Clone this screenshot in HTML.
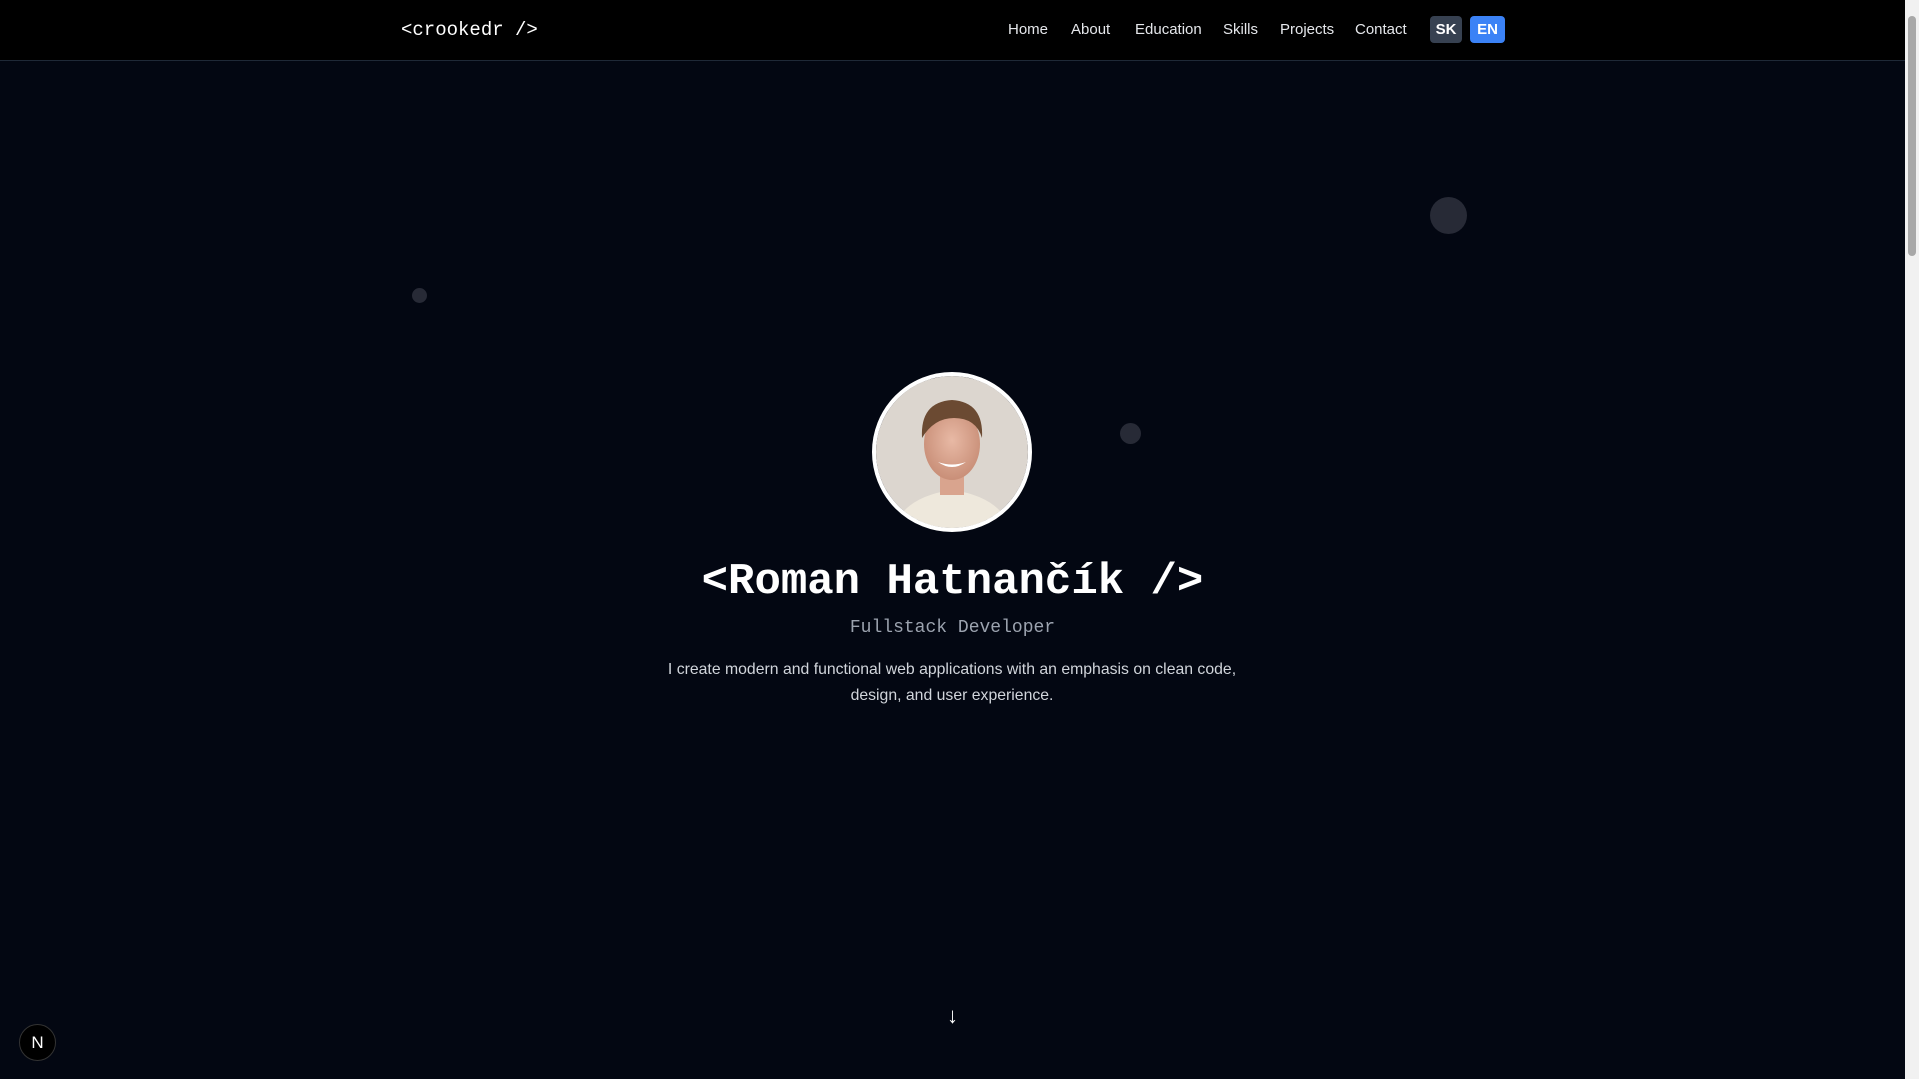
<!DOCTYPE html>
<html><head><meta charset="utf-8"><style>
*{margin:0;padding:0;box-sizing:border-box}
html,body{width:1919px;height:1079px;overflow:hidden;background:#030712;font-family:"Liberation Sans",sans-serif;color:#fff}
nav{position:absolute;left:0;top:0;width:1905px;height:61px;background:#000;border-bottom:1px solid #1f2937}
.logo{position:absolute;left:401px;top:19px;font:19px "Liberation Mono",monospace;color:#fff}
.links a{position:absolute;top:21px;font-size:15px;color:#e5e7eb;text-decoration:none}
.btn{position:absolute;top:16px;height:27px;border-radius:4px;font-size:15px;font-weight:bold;text-align:center;line-height:27px}
.dot{position:absolute;border-radius:50%;background:#272a36}
.sb{position:absolute;right:0;top:0;width:14px;height:1079px;background:#f1f1f1}
.sb div{position:absolute;left:3px;top:16px;width:8px;height:240px;background:#a8a8a8;border-radius:4px}
</style></head><body>
<nav>
<div class="logo">&lt;crookedr /&gt;</div>
<div class="links">
<a style="left:1008px">Home</a><a style="left:1071px">About</a><a style="left:1135px">Education</a><a style="left:1223px">Skills</a><a style="left:1280px">Projects</a><a style="left:1355px">Contact</a>
</div>
<div class="btn" style="left:1430px;width:32px;background:#374151">SK</div>
<div class="btn" style="left:1470px;width:35px;background:#3b82f6">EN</div>
</nav>
<div class="dot" style="left:1430px;top:197px;width:37px;height:37px"></div>
<div class="dot" style="left:412px;top:288px;width:15px;height:15px"></div>
<div class="dot" style="left:1120px;top:423px;width:21px;height:21px"></div>
<svg style="position:absolute;left:872px;top:372px" width="160" height="160" viewBox="0 0 160 160">
<defs><clipPath id="c"><circle cx="80" cy="80" r="76"/></clipPath>
<radialGradient id="f" cx="50%" cy="45%" r="55%"><stop offset="0" stop-color="#e8b9a5"/><stop offset="1" stop-color="#c98f78"/></radialGradient></defs>
<g clip-path="url(#c)">
<rect width="160" height="160" fill="#dcd6cf"/>
<path d="M20 160 Q30 125 80 118 Q130 125 140 160Z" fill="#eee8dc"/>
<rect x="68" y="95" width="24" height="28" fill="#d9a48e"/>
<ellipse cx="80" cy="72" rx="28" ry="36" fill="url(#f)"/>
<path d="M50 66 Q48 30 80 28 Q112 30 110 66 Q104 46 82 46 Q62 46 50 66Z" fill="#6b4a32"/>
<path d="M66 90 Q80 100 94 90 Q80 95 66 90Z" fill="#fff"/>
</g>
<circle cx="80" cy="80" r="78" fill="none" stroke="#fff" stroke-width="4"/>
</svg>
<div style="position:absolute;left:0;width:1905px;top:557px;text-align:center;font:bold 44px 'Liberation Mono',monospace">&lt;Roman Hatnančík /&gt;</div>
<div style="position:absolute;left:0;width:1905px;top:618px;text-align:center;font:18px 'Liberation Mono',monospace;color:#9ca3af">Fullstack Developer</div>
<div style="position:absolute;left:652px;width:600px;top:657px;text-align:center;font-size:15.8px;line-height:26px;color:#d1d5db">I create modern and functional web applications with an emphasis on clean code, design, and user experience.</div>
<div style="position:absolute;left:947px;top:1003px;font-size:22px;color:#fff">↓</div>
<div style="position:absolute;left:19px;top:1024px;width:37px;height:37px;border-radius:50%;background:#000;border:1px solid #333;color:#fff;text-align:center;line-height:35px;font-size:17px">N</div>
<div class="sb"><div></div></div>
</body></html>
